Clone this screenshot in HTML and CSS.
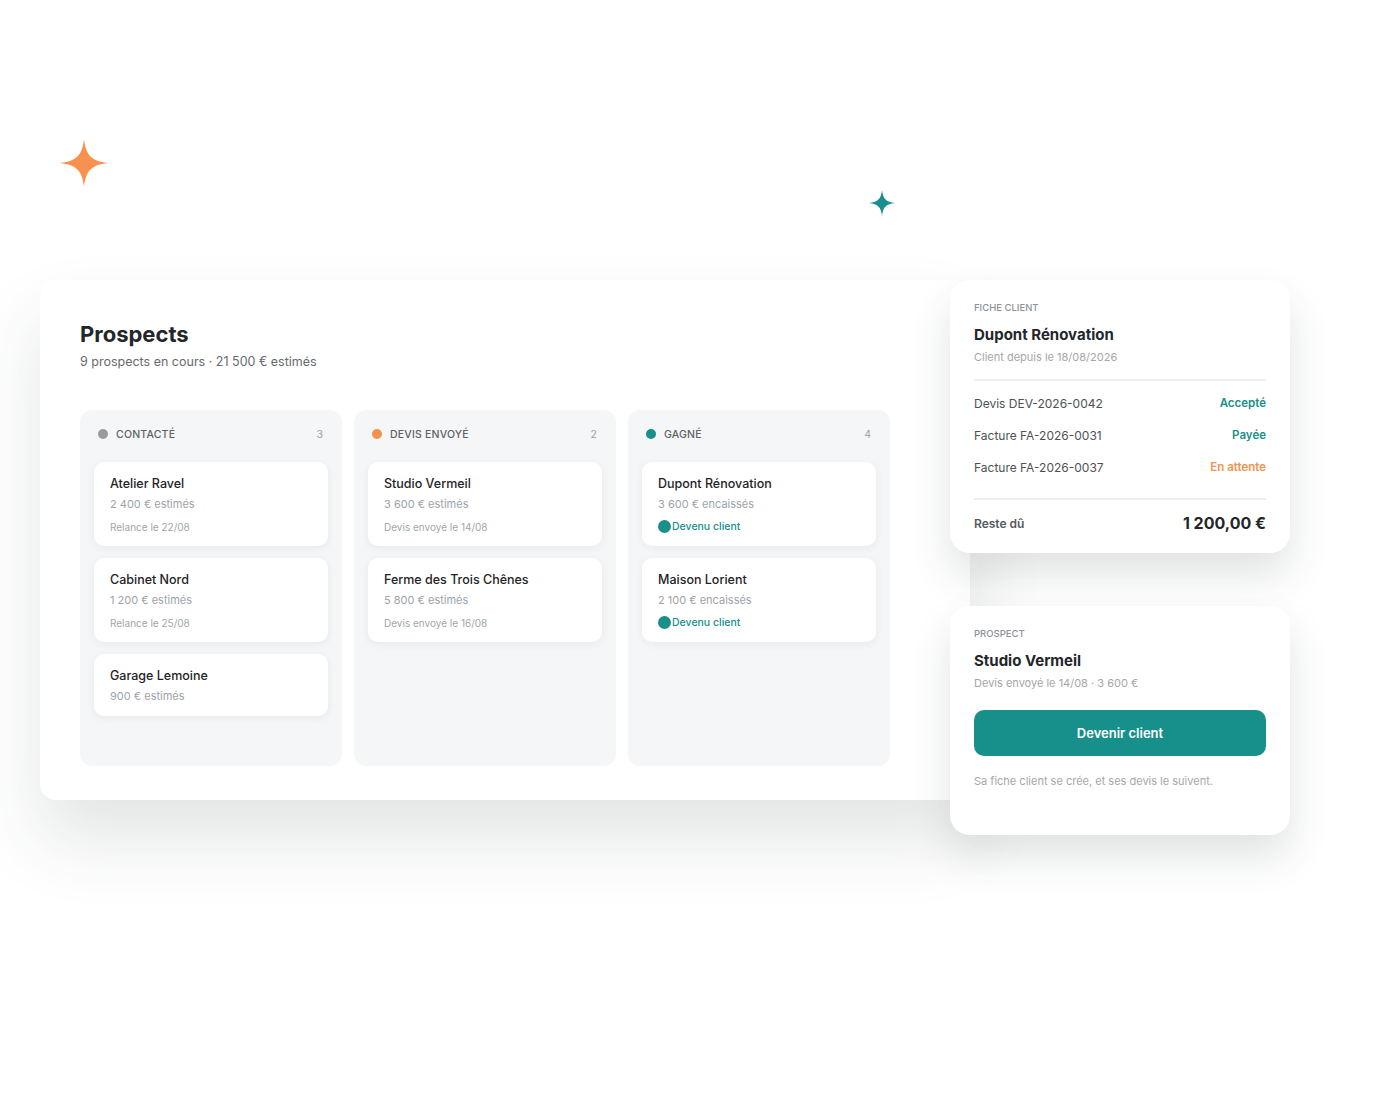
FILE: index.html
```html
<!DOCTYPE html>
<html lang="fr">

<head>
    <meta charset="UTF-8" />
    <meta name="viewport" content="width=device-width, initial-scale=1.0" />
    <title>Prospects</title>
    <link rel="stylesheet" href="styles.css">
</head>

<body>
    <div class="stage">
        <!-- étoiles décoratives -->
        <svg class="star star-orange" viewBox="0 0 24 24"><path d="M12 0C12.9 8 15.5 11 24 12C15.5 13 12.9 16 12 24C11.1 16 8.5 13 0 12C8.5 11 11.1 8 12 0Z" /></svg>
        <svg class="star star-teal" viewBox="0 0 24 24"><path d="M12 0C12.9 8 15.5 11 24 12C15.5 13 12.9 16 12 24C11.1 16 8.5 13 0 12C8.5 11 11.1 8 12 0Z" /></svg>

        <div class="board">
            <h1>Prospects</h1>
            <div class="board-sub">9 prospects en cours · 21 500 € estimés</div>

            <div class="columns">
                <div class="column">
                    <div class="col-head">
                        <span class="dot dot-grey"></span>
                        <span class="col-title">Contacté</span>
                        <span class="col-count">3</span>
                    </div>
                    <div class="lead">
                        <div class="lead-name">Atelier Ravel</div>
                        <div class="lead-amount">2 400 € estimés</div>
                        <div class="lead-note">Relance le 22/08</div>
                    </div>
                    <div class="lead">
                        <div class="lead-name">Cabinet Nord</div>
                        <div class="lead-amount">1 200 € estimés</div>
                        <div class="lead-note">Relance le 25/08</div>
                    </div>
                    <div class="lead">
                        <div class="lead-name">Garage Lemoine</div>
                        <div class="lead-amount">900 € estimés</div>
                    </div>
                </div>

                <div class="column">
                    <div class="col-head">
                        <span class="dot dot-orange"></span>
                        <span class="col-title">Devis envoyé</span>
                        <span class="col-count">2</span>
                    </div>
                    <div class="lead">
                        <div class="lead-name">Studio Vermeil</div>
                        <div class="lead-amount">3 600 € estimés</div>
                        <div class="lead-note">Devis envoyé le 14/08</div>
                    </div>
                    <div class="lead">
                        <div class="lead-name">Ferme des Trois Chênes</div>
                        <div class="lead-amount">5 800 € estimés</div>
                        <div class="lead-note">Devis envoyé le 16/08</div>
                    </div>
                </div>

                <div class="column">
                    <div class="col-head">
                        <span class="dot dot-teal"></span>
                        <span class="col-title">Gagné</span>
                        <span class="col-count">4</span>
                    </div>
                    <div class="lead">
                        <div class="lead-name">Dupont Rénovation</div>
                        <div class="lead-amount">3 600 € encaissés</div>
                        <div class="lead-won"><span class="won-dot"></span>Devenu client</div>
                    </div>
                    <div class="lead">
                        <div class="lead-name">Maison Lorient</div>
                        <div class="lead-amount">2 100 € encaissés</div>
                        <div class="lead-won"><span class="won-dot"></span>Devenu client</div>
                    </div>
                </div>
            </div>
        </div>

        <div class="side">
            <div class="panel panel-client">
                <div class="panel-label">Fiche client</div>
                <div class="panel-title">Dupont Rénovation</div>
                <div class="panel-sub">Client depuis le 18/08/2026</div>
                <div class="doc-list">
                    <div class="doc-row"><span>Devis DEV-2026-0042</span><span class="status status-ok">Accepté</span></div>
                    <div class="doc-row"><span>Facture FA-2026-0031</span><span class="status status-ok">Payée</span></div>
                    <div class="doc-row"><span>Facture FA-2026-0037</span><span class="status status-wait">En attente</span></div>
                </div>
                <div class="total-row">
                    <span class="total-label">Reste dû</span>
                    <span class="total-value">1 200,00 €</span>
                </div>
            </div>

            <div class="panel panel-prospect">
                <div class="panel-label">Prospect</div>
                <div class="panel-title">Studio Vermeil</div>
                <div class="panel-sub">Devis envoyé le 14/08 · 3 600 €</div>
                <button class="convert">Devenir client</button>
                <div class="panel-hint">Sa fiche client se crée, et ses devis le suivent.</div>
            </div>
        </div>
    </div>
</body>

</html>
```

FILE: styles.css
```css
body {
    margin: 0;
    background-color: #ffffff;
    font-family: Inter, "Noto Sans", sans-serif;
    color: #1f2328;
}

.stage {
    position: relative;
    width: 1400px;
    height: 1100px;
    padding: 280px 0 0 40px;
    box-sizing: border-box;
}

.star {
    position: absolute;
}

.star-orange {
    left: 60px;
    top: 139px;
    width: 48px;
    height: 48px;
    fill: #f7914e;
}

.star-teal {
    left: 869px;
    top: 190px;
    width: 26px;
    height: 26px;
    fill: #178f8a;
}

/* tableau principal */
.board {
    width: 930px;
    height: 520px;
    box-sizing: border-box;
    padding: 40px 40px 34px;
    background-color: #fff;
    border-radius: 16px;
    box-shadow: 0 40px 70px rgba(40, 55, 55, 0.13);
}

.board h1 {
    margin: 0;
    font-size: 22px;
    line-height: 28px;
    font-weight: 700;
    color: #23262a;
}

.board-sub {
    margin-top: 5px;
    font-size: 12.5px;
    line-height: 18px;
    color: #666b70;
}

.columns {
    display: grid;
    grid-template-columns: repeat(3, 262px);
    gap: 12px;
    margin-top: 39px;
}

.column {
    height: 356px;
    box-sizing: border-box;
    padding: 12px 14px;
    background-color: #f5f6f7;
    border-radius: 12px;
}

.col-head {
    display: flex;
    align-items: center;
    height: 24px;
    padding: 0 5px 0 4px;
    margin-bottom: 16px;
}

.dot {
    width: 10px;
    height: 10px;
    border-radius: 50%;
    margin-right: 8px;
}

.dot-grey {
    background-color: #979c9f;
}

.dot-orange {
    background-color: #f7914e;
}

.dot-teal {
    background-color: #178f8a;
}

.col-title {
    flex: 1;
    font-size: 10.5px;
    font-weight: 500;
    text-transform: uppercase;
    letter-spacing: 0.2px;
    color: #5d6166;
}

.col-count {
    font-size: 10.5px;
    color: #9ba0a4;
}

.lead {
    padding: 13px 16px 12px;
    margin-bottom: 12px;
    background-color: #fff;
    border-radius: 10px;
    box-shadow: 0 2px 8px rgba(30, 40, 50, 0.06);
}

.lead-name {
    font-size: 12.5px;
    line-height: 18px;
    font-weight: 500;
    color: #1f2328;
}

.lead-amount {
    margin-top: 3px;
    font-size: 11px;
    line-height: 16px;
    color: #9ea3a8;
}

.lead-note {
    margin-top: 8px;
    font-size: 10px;
    line-height: 14px;
    color: #a2a6aa;
}

.lead-won {
    display: flex;
    align-items: center;
    margin-top: 8px;
    font-size: 10.5px;
    line-height: 14px;
    font-weight: 500;
    color: #178f8a;
}

.won-dot {
    width: 13px;
    height: 13px;
    margin-right: 1px;
    margin-top: -1px;
    border-radius: 50%;
    background-color: #178f8a;
}

/* panneaux latéraux */
.side {
    position: absolute;
    left: 950px;
    top: 280px;
    width: 340px;
}

.panel {
    box-sizing: border-box;
    padding: 22px 24px;
    background-color: #fff;
    border-radius: 20px;
    box-shadow: 0 22px 40px rgba(40, 55, 55, 0.14);
}

.panel-client {
    height: 273px;
}

.panel-prospect {
    height: 229px;
    margin-top: 53px;
}

.panel-label {
    font-size: 9.5px;
    line-height: 12px;
    font-weight: 500;
    text-transform: uppercase;
    color: #8d9297;
}

.panel-title {
    margin-top: 11px;
    font-size: 15px;
    line-height: 20px;
    font-weight: 700;
    color: #23262a;
}

.panel-sub {
    margin-top: 5px;
    font-size: 11px;
    line-height: 14px;
    color: #a3a7ab;
}

.doc-list {
    margin-top: 15px;
    padding: 12px 0 21px;
    border-top: 2px solid #eceef0;
    border-bottom: 2px solid #eceef0;
}

.doc-row {
    display: flex;
    justify-content: space-between;
    align-items: center;
    height: 20px;
    font-size: 12px;
    color: #4d5156;
}

.doc-row + .doc-row {
    margin-top: 12px;
}

.status {
    font-size: 11.5px;
    font-weight: 600;
}

.status-ok {
    color: #178f8a;
}

.status-wait {
    color: #f7914e;
}

.total-row {
    display: flex;
    justify-content: space-between;
    align-items: center;
    height: 24px;
    margin-top: 11px;
}

.total-label {
    font-size: 12px;
    font-weight: 600;
    color: #55595e;
}

.total-value {
    font-size: 16px;
    font-weight: 700;
    color: #23262a;
}

.convert {
    display: block;
    width: 100%;
    height: 46px;
    margin-top: 20px;
    border: none;
    border-radius: 10px;
    background-color: #178f8a;
    color: #fff;
    font-family: inherit;
    font-size: 13px;
    font-weight: 600;
    cursor: pointer;
}

.panel-hint {
    margin-top: 18px;
    font-size: 11px;
    line-height: 14px;
    color: #a3a7ab;
}
```
